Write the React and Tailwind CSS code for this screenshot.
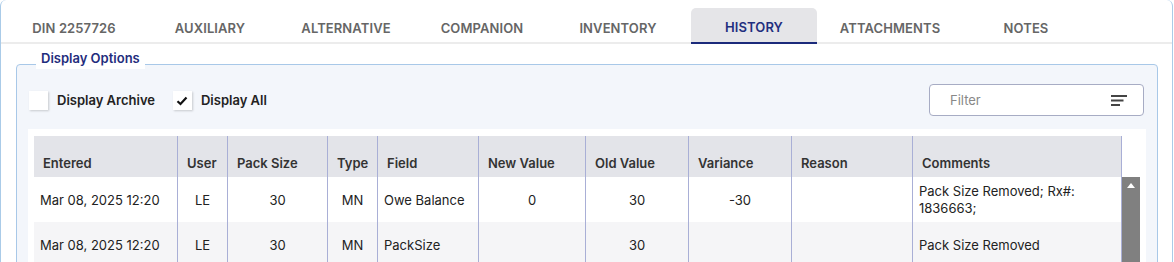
import React from "react";

const tabs = [
  "DIN 2257726",
  "AUXILIARY",
  "ALTERNATIVE",
  "COMPANION",
  "INVENTORY",
  "HISTORY",
  "ATTACHMENTS",
  "NOTES",
];

const cols = [
  { label: "Entered", w: "w-[144px]", align: "left" },
  { label: "User", w: "w-[50px]", align: "center" },
  { label: "Pack Size", w: "w-[100px]", align: "center" },
  { label: "Type", w: "w-[50px]", align: "center" },
  { label: "Field", w: "w-[101px]", align: "left" },
  { label: "New Value", w: "w-[107px]", align: "center" },
  { label: "Old Value", w: "w-[103px]", align: "center" },
  { label: "Variance", w: "w-[103px]", align: "center" },
  { label: "Reason", w: "w-[121px]", align: "left" },
  { label: "Comments", w: "w-[209px]", align: "left" },
];

const rows = [
  {
    bg: "bg-white",
    cells: [
      "Mar 08, 2025 12:20",
      "LE",
      "30",
      "MN",
      "Owe Balance",
      "0",
      "30",
      "-30",
      "",
      "Pack Size Removed; Rx#: 1836663;",
    ],
  },
  {
    bg: "bg-[#f5f5f7]",
    cells: [
      "Mar 08, 2025 12:20",
      "LE",
      "30",
      "MN",
      "PackSize",
      "",
      "30",
      "",
      "",
      "Pack Size Removed",
    ],
  },
];

function Checkbox({ checked }) {
  return (
    <div className="w-[19px] h-[19px] bg-white shadow-[1px_1px_2px_rgba(0,0,0,0.18)] flex items-center justify-center">
      {checked && (
        <svg width="12" height="10" viewBox="0 0 12 10">
          <path d="M1.5 5.2 L4.5 8 L10.5 1.5" stroke="#111" strokeWidth="2.2" fill="none" />
        </svg>
      )}
    </div>
  );
}

export default function App() {
  return (
    <div className="w-[1174px] h-[262px] overflow-hidden bg-white font-['Inter',sans-serif] text-[13px]">
      <div className="w-[1173px] h-full border-l border-r border-[#aacbe8] rounded-tl-[6px] rounded-tr-[6px]">
        {/* tabs */}
        <div className="pt-[8px] pl-[10px] flex gap-[10px] border-b-2 border-[#ececec] h-[44px]">
          {tabs.map((t) => {
            const active = t === "HISTORY";
            return (
              <div
                key={t}
                className={
                  "w-[126px] h-[36px] -mb-[2px] flex items-center justify-center pt-[5px] font-semibold tracking-[0.1px] " +
                  (active
                    ? "bg-[#e5e5e8] rounded-t-[5px] border-b-2 border-[#1b2a7b] text-[#1f2f7f]"
                    : "text-[#666666]")
                }
              >
                {t}
              </div>
            );
          })}
        </div>

        {/* fieldset */}
        <div className="mt-[20px] ml-[15px] w-[1142px] h-[220px] relative border border-[#a8c8e8] rounded-[4px] bg-[#f3f6fb]">
          <div className="absolute -top-[15px] left-[19px] bg-white px-[5px] h-[19px] leading-[16px] font-semibold text-[#1f2d7d]">
            Display Options
          </div>

          <div className="flex items-center justify-between pl-[12px] pr-[13px] pt-[19px]">
            <div className="flex items-center pt-[1px]">
              <Checkbox />
              <span className="ml-[9px] font-semibold text-[#222]">Display Archive</span>
              <div className="ml-[18px]">
                <Checkbox checked />
              </div>
              <span className="ml-[9px] font-semibold text-[#222]">Display All</span>
            </div>
            <div className="w-[215px] h-[32px] bg-white border border-[#a7acc4] rounded-[4px] flex items-center justify-between pl-[20px] pr-[16px] pt-[1px]">
              <span className="text-[#888888]">Filter</span>
              <svg width="16" height="12" viewBox="0 0 16 12">
                <rect x="0" y="0" width="16" height="2" fill="#444" />
                <rect x="0" y="4.5" width="12.5" height="2" fill="#444" />
                <rect x="0" y="9" width="9" height="2" fill="#444" />
              </svg>
            </div>
          </div>

          {/* table panel */}
          <div className="mt-[13px] ml-[11px] w-[1118px] bg-white pt-[7px] pl-[6px] pr-[6px] h-[200px]">
            <div className="flex">
              {cols.map((c) => (
                <div
                  key={c.label}
                  className={
                    c.w +
                    " h-[41px] bg-[#e3e4e9] flex items-end pb-[4px] pl-[9px] font-semibold text-[#333] border-r border-[#a9afd6]"
                  }
                >
                  {c.label}
                </div>
              ))}
            </div>
            <div className="flex">
              <div>
                {rows.map((r, ri) => (
                  <div key={ri} className={"flex " + r.bg}>
                    {r.cells.map((v, i) => (
                      <div
                        key={i}
                        className={
                          cols[i].w +
                          " h-[45px] flex items-center border-r border-[#a9afd6] text-[#222] leading-[17px] pt-[1px] " +
                          (cols[i].align === "center" ? "justify-center" : "pl-[6px] pr-[4px]")
                        }
                      >
                        {v}
                      </div>
                    ))}
                  </div>
                ))}
              </div>
              <div className="w-[18px] bg-[#808080] flex justify-center pt-[6px]">
                <svg width="8" height="5" viewBox="0 0 8 5">
                  <path d="M0 5 L4 0 L8 5 Z" fill="#fff" />
                </svg>
              </div>
            </div>
          </div>
        </div>
      </div>
    </div>
  );
}
